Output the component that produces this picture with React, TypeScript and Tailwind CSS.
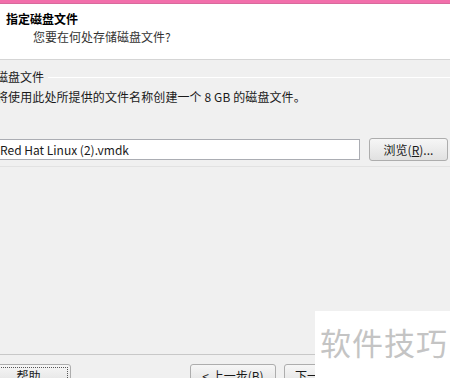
const font = "font-['Microsoft_YaHei','Noto_Sans_CJK_SC',sans-serif]";

const WinButton = ({
  children,
  className = "",
}: {
  children: React.ReactNode;
  className?: string;
}) => (
  <div
    className={`flex h-[23px] items-center justify-center rounded-[3px] border border-[#adadad] bg-gradient-to-b from-[#f6f6f6] to-[#e1e1e1] text-[12px] text-[#1a1a1a] ${className}`}
  >
    {children}
  </div>
);

export default function App() {
  return (
    <div className={`relative h-[378px] w-[450px] overflow-hidden bg-[#f0f0f0] ${font}`}>
      {/* title bar strip */}
      <div className="h-[4px] border-b border-[#d86a9c] bg-[#f26fab]" />

      {/* header */}
      <div className="h-[56px] border-b border-[#d5d5d5] bg-white pl-[6px] pt-[7px]">
        <div className="text-[12px] font-bold leading-[16px] text-black">指定磁盘文件</div>
        <div className="pl-[27px] pt-[2px] text-[12px] leading-[16px] text-[#333]">
          您要在何处存储磁盘文件?
        </div>
      </div>

      {/* body */}
      <div className="h-[295px] border-b border-[#c8c8c8]">
        <div className="flex items-center pt-[9px]">
          <span className="ml-[-4px] pr-[4px] text-[12px] leading-[16px] text-[#1a1a1a]">磁盘文件</span>
          <div className="h-px flex-1 border-b border-white bg-[#dcdcdc]" />
        </div>
        <div className="ml-[-4px] whitespace-nowrap pt-[4px] text-[12px] leading-[16px] tracking-[0.1px] text-[#1a1a1a]">
          将使用此处所提供的文件名称创建一个 8 GB 的磁盘文件。
        </div>
        <div className="flex items-center pt-[33px]">
          <div className="ml-[-6px] flex h-[21px] w-[366px] items-center border border-[#abadb3] bg-white pl-[5px] text-[12px] text-[#1a1a1a]">
            Red Hat Linux (2).vmdk
          </div>
          <WinButton className="ml-[9px] w-[79px]">
            浏览(<span className="underline">R</span>)...
          </WinButton>
        </div>
        <div className="mt-[5px] h-px bg-[#e2e2e2]" />
      </div>

      {/* footer buttons */}
      <div className="flex pt-[9px]">
        <WinButton className="ml-[-6px] w-[77px] border-[#3c7fb1] from-[#eaf6fd] to-[#d7effc] outline-1 outline-dotted outline-offset-[-4px] outline-[#555]">
          <span className="pr-[8px]">帮助</span>
        </WinButton>
        <WinButton className="ml-[119px] w-[86px]">&lt; 上一步(B)</WinButton>
        <WinButton className="ml-[8px] w-[86px] justify-start border-[#3c7fb1] pl-[10px]">下一步(N) &gt;</WinButton>
      </div>

      {/* watermark */}
      <div className="absolute left-[315px] top-[311px] flex h-[67px] w-[135px] items-start bg-white pl-[5px] pt-[13px]">
        <span className="text-[31px] leading-[36px] tracking-[1px] text-[#c4c4c4]">软件技巧</span>
      </div>
    </div>
  );
}
